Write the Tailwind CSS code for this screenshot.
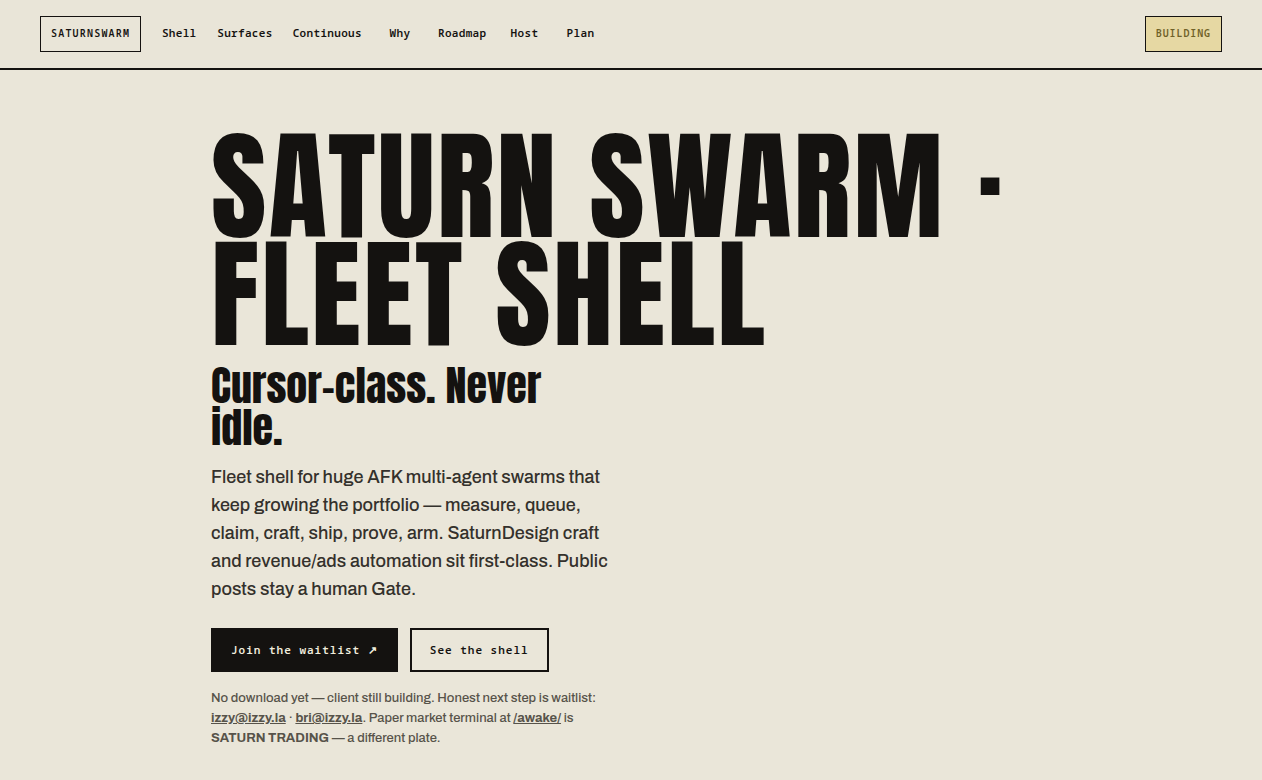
<!DOCTYPE html>
<html lang="en">
<head>
<meta charset="utf-8">
<meta name="viewport" content="width=device-width, initial-scale=1">
<title>SaturnSwarm</title>
<script src="https://cdn.jsdelivr.net/npm/@tailwindcss/browser@4"></script>
</head>
<body class="min-h-screen bg-[#eae6d9] font-[Archivo,Liberation_Sans,sans-serif] text-[#141210]">
<header class="flex items-center gap-4 border-b-2 border-[#141210] bg-[#e9e5d8] px-10 py-4 font-['Noto_Sans_Mono','DejaVu_Sans_Mono',monospace] font-semibold">
  <a href="#" class="flex h-9 items-center border border-[#141210] px-2.5 pb-px text-[10px] tracking-[0.12em]">SATURNSWARM</a>
  <nav aria-label="Main" class="flex flex-1 items-center gap-3 pb-0.5 text-[11px] leading-4 tracking-[0.03em]">
    <a href="#shell" class="min-w-11 px-1 text-center">Shell</a>
    <a href="#surfaces" class="min-w-11 px-1 text-center">Surfaces</a>
    <a href="#continuous" class="min-w-11 px-1 text-center">Continuous</a>
    <a href="#why" class="min-w-11 px-1 text-center">Why</a>
    <a href="#roadmap" class="min-w-11 px-1 text-center">Roadmap</a>
    <a href="#host" class="min-w-11 px-1 text-center">Host</a>
    <a href="#plan" class="min-w-11 px-1 text-center">Plan</a>
  </nav>
  <span class="flex h-9 items-center border border-[#141210] bg-[#e6d8a3] px-2.5 pb-0.5 text-[10px] tracking-[0.09em] text-[#6f6128]">BUILDING</span>
</header>
<main class="mx-auto max-w-[840px] pt-[62px] pb-8">
  <h1 class="font-[Anton,Impact,sans-serif] text-[120px] leading-[108px] font-normal tracking-[0.02em]">SATURN SWARM · FLEET SHELL</h1>
  <div class="max-w-[400px]">
    <p class="mt-[17px] font-[Anton,Impact,sans-serif] text-[42px] leading-[42px]">Cursor-class. Never idle.</p>
    <p class="mt-3.5 text-lg leading-7 font-medium text-[#34312c]">Fleet shell for huge AFK multi-agent swarms that keep growing the portfolio — measure, queue, claim, craft, ship, prove, arm. SaturnDesign craft and revenue/ads automation sit first-class. Public posts stay a human Gate.</p>
    <div class="mt-[25px] flex gap-3 font-['Noto_Sans_Mono',serif] text-[11px] font-semibold tracking-[1px] whitespace-nowrap">
      <a href="#waitlist" class="flex h-11 items-center border-2 border-[#141210] bg-[#141210] px-4.5 text-[#f1eddf]">Join the waitlist ↗</a>
      <a href="#shell" class="flex h-11 items-center border-2 border-[#141210] px-4.5">See the shell</a>
    </div>
    <p class="mt-4 text-[13px] leading-5 font-medium text-[#57534a]">No download yet — client still building. Honest next step is waitlist: <a href="mailto:izzy@izzy.la" class="font-bold underline">izzy@izzy.la</a> · <a href="mailto:bri@izzy.la" class="font-bold underline">bri@izzy.la</a>. Paper market terminal at <a href="/awake/" class="font-bold underline">/awake/</a> is <strong>SATURN TRADING</strong> — a different plate.</p>
  </div>
</main>
</body>
</html>
